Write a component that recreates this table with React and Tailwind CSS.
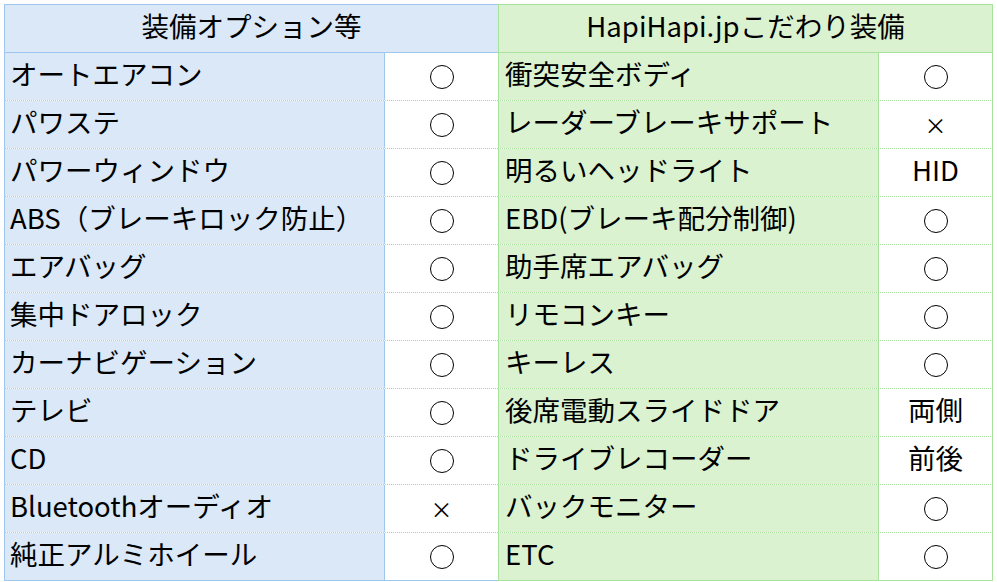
import React from "react";

const left = [
  ["オートエアコン", "〇"],
  ["パワステ", "〇"],
  ["パワーウィンドウ", "〇"],
  ["ABS（ブレーキロック防止）", "〇"],
  ["エアバッグ", "〇"],
  ["集中ドアロック", "〇"],
  ["カーナビゲーション", "〇"],
  ["テレビ", "〇"],
  ["CD", "〇"],
  ["Bluetoothオーディオ", "×"],
  ["純正アルミホイール", "〇"],
];

const right = [
  ["衝突安全ボディ", "〇"],
  ["レーダーブレーキサポート", "×"],
  ["明るいヘッドライト", "HID"],
  ["EBD(ブレーキ配分制御)", "〇"],
  ["助手席エアバッグ", "〇"],
  ["リモコンキー", "〇"],
  ["キーレス", "〇"],
  ["後席電動スライドドア", "両側"],
  ["ドライブレコーダー", "前後"],
  ["バックモニター", "〇"],
  ["ETC", "〇"],
];

function Val({ v }) {
  if (v === "〇") {
    return <span className="block w-[24px] h-[24px] rounded-full border-[1.5px] border-black" aria-label="〇" />;
  }
  if (v === "×") {
    return <span className="text-[22px] leading-none pb-[2px]">×</span>;
  }
  return <span className="pb-[6px]">{v}</span>;
}

export default function App() {
  const font = { fontFamily: '"Noto Sans CJK JP", "Noto Sans", sans-serif' };
  return (
    <div className="w-[997px] h-[582px] bg-white pl-[4px] pt-[4px] text-black" style={font}>
      <div className="flex text-[27.5px] leading-none">
        {/* left half */}
        <div className="w-[494px] flex flex-col">
          <div className="h-[49px] border-t border-b border-l border-[#9fc6ef] bg-[#dae8f7] flex items-center justify-center pb-[5px]">
            装備オプション等
          </div>
          {left.map(([l, v], i) => (
            <div
              key={i}
              className={
                "h-[48px] flex border-b border-[#9fc6ef] " +
                (i === left.length - 1 ? "border-solid" : "border-dotted")
              }
            >
              <div className="w-[380px] h-full border-l border-[#9fc6ef] bg-[#dae8f7] flex items-center pl-[5px] pb-[5px] whitespace-nowrap">
                {l}
              </div>
              <div className="w-[114px] h-full border-l border-[#9fc6ef] bg-white flex items-center justify-center">
                <Val v={v} />
              </div>
            </div>
          ))}
        </div>
        {/* right half */}
        <div className="w-[495px] flex flex-col">
          <div className="h-[49px] border-t border-b border-l border-r border-[#a8e29c] bg-[#daf2d0] flex items-center justify-center pb-[5px]">
            HapiHapi.jpこだわり装備
          </div>
          {right.map(([l, v], i) => (
            <div
              key={i}
              className={
                "h-[48px] flex border-b border-[#a8e29c] " +
                (i === right.length - 1 ? "border-solid" : "border-dotted")
              }
            >
              <div className="w-[380px] h-full border-l border-[#a8e29c] bg-[#daf2d0] flex items-center pl-[6px] pb-[5px] whitespace-nowrap">
                {l}
              </div>
              <div className="w-[115px] h-full border-l border-r border-[#a8e29c] bg-white flex items-center justify-center">
                <Val v={v} />
              </div>
            </div>
          ))}
        </div>
      </div>
    </div>
  );
}
